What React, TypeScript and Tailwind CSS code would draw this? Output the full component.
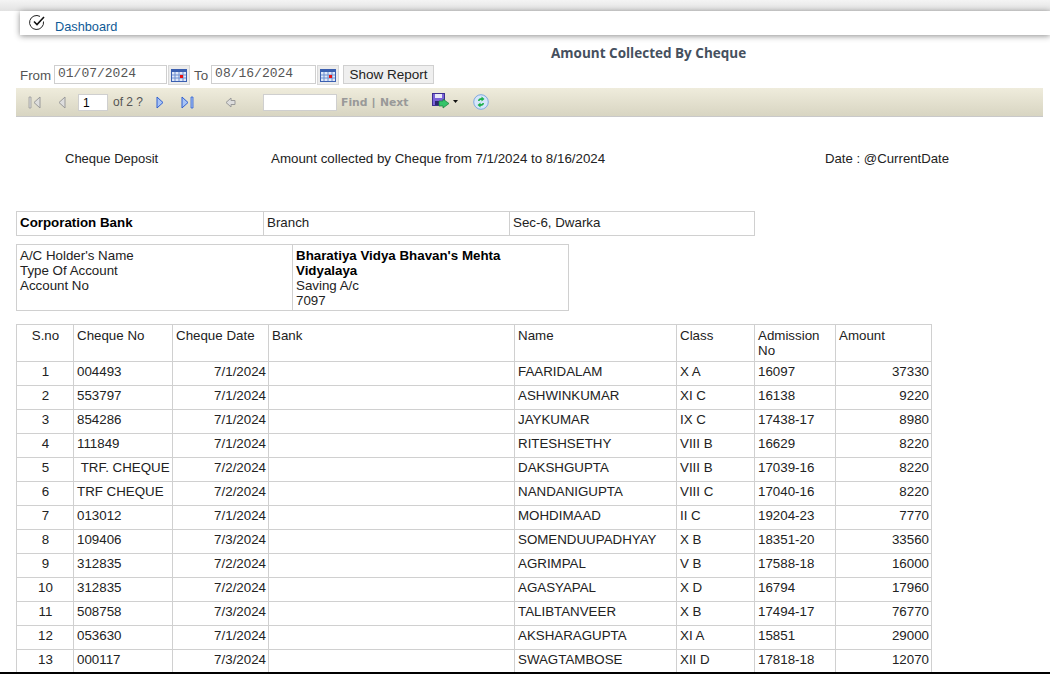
import { ReactNode } from "react";

const rows = [
  ["1", "004493", "7/1/2024", "FAARIDALAM", "X A", "16097", "37330"],
  ["2", "553797", "7/1/2024", "ASHWINKUMAR", "XI C", "16138", "9220"],
  ["3", "854286", "7/1/2024", "JAYKUMAR", "IX C", "17438-17", "8980"],
  ["4", "111849", "7/1/2024", "RITESHSETHY", "VIII B", "16629", "8220"],
  ["5", "\u00a0TRF. CHEQUE", "7/2/2024", "DAKSHGUPTA", "VIII B", "17039-16", "8220"],
  ["6", "TRF CHEQUE", "7/2/2024", "NANDANIGUPTA", "VIII C", "17040-16", "8220"],
  ["7", "013012", "7/1/2024", "MOHDIMAAD", "II C", "19204-23", "7770"],
  ["8", "109406", "7/3/2024", "SOMENDUUPADHYAY", "X B", "18351-20", "33560"],
  ["9", "312835", "7/2/2024", "AGRIMPAL", "V B", "17588-18", "16000"],
  ["10", "312835", "7/2/2024", "AGASYAPAL", "X D", "16794", "17960"],
  ["11", "508758", "7/3/2024", "TALIBTANVEER", "X B", "17494-17", "76770"],
  ["12", "053630", "7/1/2024", "AKSHARAGUPTA", "XI A", "15851", "29000"],
  ["13", "000117", "7/3/2024", "SWAGTAMBOSE", "XII D", "17818-18", "12070"],
];

const CalendarIcon = () => (
  <div className="w-[22px] h-[20px] bg-[#ececec] border border-[#d8d8d8] flex items-center justify-center shrink-0">
    <svg width="16" height="13" viewBox="0 0 16 13">
      <rect x="0.5" y="0.5" width="15" height="12" fill="#dfe8f8" stroke="#3a5fb0" />
      <rect x="0.5" y="0.5" width="15" height="2.5" fill="#3a5fb0" />
      <path d="M4 3v9M8 3v9M12 3v9M1 6h14M1 9h14" stroke="#6f8fd0" strokeWidth="1" />
      <rect x="9" y="6" width="3" height="3" fill="#e81010" />
    </svg>
  </div>
);

const DateField = ({ value, width }: { value: string; width: string }) => (
  <div className={`${width} h-[19px] border border-[#cfcfcf] bg-white pl-[3px] text-[13px] leading-[15px] text-[#555] font-['Liberation_Mono',monospace]`}>
    {value}
  </div>
);

const Cell = ({ children, className = "" }: { children?: ReactNode; className?: string }) => (
  <td className={`border border-[#d0d0d0] pl-[3px] pr-[2px] align-top ${className}`}>{children}</td>
);

const Toolbar = () => (
  <div className="ml-4 mr-[7px] h-[29px] flex items-center bg-gradient-to-b from-[#efecdc] to-[#d8d5c2] border-b border-[#c9c9c9] font-['Liberation_Sans',sans-serif]">
    <svg className="ml-[12px] shrink-0" width="13" height="13" viewBox="0 0 13 13">
      <path d="M1 1h2v11H1z" fill="#ddd" stroke="#999" strokeWidth="0.8" />
      <path d="M12 1v11L6 6.5z" fill="#ddd" stroke="#999" />
    </svg>
    <svg className="ml-[17px] shrink-0" width="8" height="13" viewBox="0 0 8 13">
      <path d="M7 1v11L1 6.5z" fill="#ddd" stroke="#999" />
    </svg>
    <div className="ml-[12px] w-[30px] h-[17px] bg-white border border-[#cfcfcf] pl-[4px] text-[12px] leading-[17px] text-black">1</div>
    <span className="ml-[5px] w-[30px] text-[12px] text-[#555] whitespace-nowrap">of 2 ?</span>
    <svg className="ml-[13px] shrink-0" width="8" height="13" viewBox="0 0 8 13">
      <path d="M1 1v11l6-5.5z" fill="#a9c4f5" stroke="#2f5fd0" />
    </svg>
    <svg className="ml-[17px] shrink-0" width="13" height="13" viewBox="0 0 13 13">
      <path d="M1 1v11l6-5.5z" fill="#a9c4f5" stroke="#2f5fd0" />
      <path d="M10 1h2v11h-2z" fill="#a9c4f5" stroke="#2f5fd0" strokeWidth="0.8" />
    </svg>
    <svg className="ml-[31px] shrink-0" width="11" height="11" viewBox="0 0 11 11">
      <path d="M1 5.5L6 1v2.5h4v4H6V10z" fill="#ddd" stroke="#999" />
    </svg>
    <div className="ml-[27px] w-[74px] h-[17px] bg-white border border-[#cfcfcf]" />
    <span className="ml-[4px] w-[27px] text-[10.8px] font-bold text-[#999] font-['DejaVu_Sans',sans-serif] whitespace-nowrap">Find</span>
    <span className="ml-[4px] w-[8px] text-[11px] font-bold text-[#999]">|</span>
    <span className="w-[28px] text-[10.8px] font-bold text-[#999] font-['DejaVu_Sans',sans-serif] whitespace-nowrap">Next</span>
    <svg className="ml-[24px] mb-[3px] shrink-0" width="18" height="16" viewBox="0 0 18 16">
      <rect x="0.5" y="0.5" width="12" height="12" fill="#7a62d8" stroke="#3d2f90" />
      <rect x="3" y="1" width="7" height="4" fill="#e8e8f8" />
      <rect x="3" y="8" width="7" height="4" fill="#2c2570" />
      <path d="M7 8l4 0 0-2 6 4.500-6 4.500 0-2-4 0z" fill="#35c46a" stroke="#1c7a3c" strokeWidth="0.7" />
    </svg>
    <svg className="ml-[3px] mb-[1px] shrink-0" width="5" height="3" viewBox="0 0 5 3">
      <path d="M0 0h5L2.500 3z" fill="#111" />
    </svg>
    <svg className="ml-[15px] shrink-0" width="16" height="16" viewBox="0 0 16 16">
      <circle cx="8" cy="8" r="7.300" fill="#d6e6fa" stroke="#7fa8e0" />
      <path d="M5 7c0-2 1.500-3 3.500-3V2.500L11.500 5 8.500 7.500V6C7 6 6.500 6.500 6.500 7z" fill="#1fb04c" />
      <path d="M11 9c0 2-1.500 3-3.500 3v1.500L4.500 11l3-2.500V10c1.500 0 2-.5 2-1z" fill="#1fb04c" />
    </svg>
  </div>
);

const App = () => {
  return (
    <div className="relative h-[674px] w-[1050px] overflow-hidden bg-white font-['Liberation_Sans',sans-serif] text-[13.33px] leading-[15px] text-[#222]">
      <div className="h-[11px] bg-gradient-to-b from-[#f4f4f4] to-[#e2e2e2]" />
      <div className="ml-5 h-[24px] bg-white flex shadow-[0_1px_6px_rgba(0,0,0,0.45)]">
        <svg className="ml-[9px] mt-[3px] shrink-0" width="18" height="17" viewBox="0 0 18 17" fill="none">
          <path d="M14.500 7.500A7 7 0 1 1 11 2.400" stroke="#222" strokeWidth="1" />
          <path d="M5 7.500l3 3 7-7.500" stroke="#111" strokeWidth="1.600" />
        </svg>
        <a className="ml-[8px] mt-[8px] text-[12.75px] leading-[16px] text-[#0f5a96]">Dashboard</a>
      </div>

      <div className="mt-[11px] pl-[551px] h-[15px] text-[13.5px] leading-[15px] font-bold text-[#45505e] font-['Open_Sans',sans-serif] whitespace-nowrap">
        Amount Collected By Cheque
      </div>

      <div className="mt-[1px] pl-5 pt-[3px] h-[26px] flex items-start text-[#555]">
        <span className="w-[30px] text-[13.33px] leading-[21px] mr-[4px]">From</span>
        <DateField value="01/07/2024" width="w-[113px]" />
        <div className="ml-[1px]">
          <CalendarIcon />
        </div>
        <span className="text-[13.33px] leading-[21px] ml-[4px] mr-[3px]">To</span>
        <DateField value="08/16/2024" width="w-[105px]" />
        <div className="ml-[1px]">
          <CalendarIcon />
        </div>
        <div className="ml-[4px] w-[91px] h-[19px] bg-[#efefef] border border-[#d0d0d0] text-center text-[13.5px] leading-[17px] text-[#222]">
          Show Report
        </div>
      </div>

      <Toolbar />

      <div className="mt-[34px] h-[18px] flex text-[13.33px] leading-[16px] whitespace-nowrap">
        <span className="ml-[65px] w-[206px] text-[13px]">Cheque Deposit</span>
        <span className="w-[554px]">Amount collected by Cheque from 7/1/2024 to 8/16/2024</span>
        <span className="text-[13.2px]">Date : @CurrentDate</span>
      </div>

      <table className="mt-[42px] ml-4 table-fixed border-collapse w-[739px]">
        <tbody>
          <tr className="h-[24px]">
            <Cell className="w-[247px] pt-[3px] font-bold text-black">Corporation Bank</Cell>
            <Cell className="w-[246px] pt-[3px]">Branch</Cell>
            <Cell className="pt-[3px]">Sec-6, Dwarka</Cell>
          </tr>
        </tbody>
      </table>

      <table className="mt-[8px] ml-4 table-fixed border-collapse w-[553px]">
        <tbody>
          <tr className="h-[66px]">
            <Cell className="w-[276px] pt-[3px]">
              A/C Holder's Name
              <br />
              Type Of Account
              <br />
              Account No
            </Cell>
            <Cell className="pt-[3px]">
              <b className="text-black">
                Bharatiya Vidya Bhavan's Mehta
                <br />
                Vidyalaya
              </b>
              <br />
              Saving A/c
              <br />
              7097
            </Cell>
          </tr>
        </tbody>
      </table>

      <table className="mt-[13px] ml-4 table-fixed border-collapse w-[916px]">
        <colgroup>
          <col className="w-[57px]" />
          <col className="w-[99px]" />
          <col className="w-[96px]" />
          <col className="w-[246px]" />
          <col className="w-[162px]" />
          <col className="w-[78px]" />
          <col className="w-[81px]" />
          <col />
        </colgroup>
        <thead>
          <tr className="h-[37px] font-normal">
            <Cell className="text-center pt-[3px]">S.no</Cell>
            <Cell className="pt-[3px]">Cheque No</Cell>
            <Cell className="pt-[3px]">Cheque Date</Cell>
            <Cell className="pt-[3px]">Bank</Cell>
            <Cell className="pt-[3px]">Name</Cell>
            <Cell className="pt-[3px]">Class</Cell>
            <Cell className="pt-[3px]">Admission No</Cell>
            <Cell className="pt-[3px]">Amount</Cell>
          </tr>
        </thead>
        <tbody>
          {rows.map((r) => (
            <tr key={r[0]} className="h-[24px]">
              <Cell className="text-center pt-[2px]">{r[0]}</Cell>
              <Cell className="pt-[2px] whitespace-nowrap">{r[1]}</Cell>
              <Cell className="text-right pt-[2px]">{r[2]}</Cell>
              <Cell />
              <Cell className="pt-[2px]">{r[3]}</Cell>
              <Cell className="pt-[2px]">{r[4]}</Cell>
              <Cell className="pt-[2px]">{r[5]}</Cell>
              <Cell className="text-right pt-[2px]">{r[6]}</Cell>
            </tr>
          ))}
        </tbody>
      </table>

      <div className="absolute bottom-0 left-0 right-0 h-[2px] bg-black" />
    </div>
  );
};

export default App;
